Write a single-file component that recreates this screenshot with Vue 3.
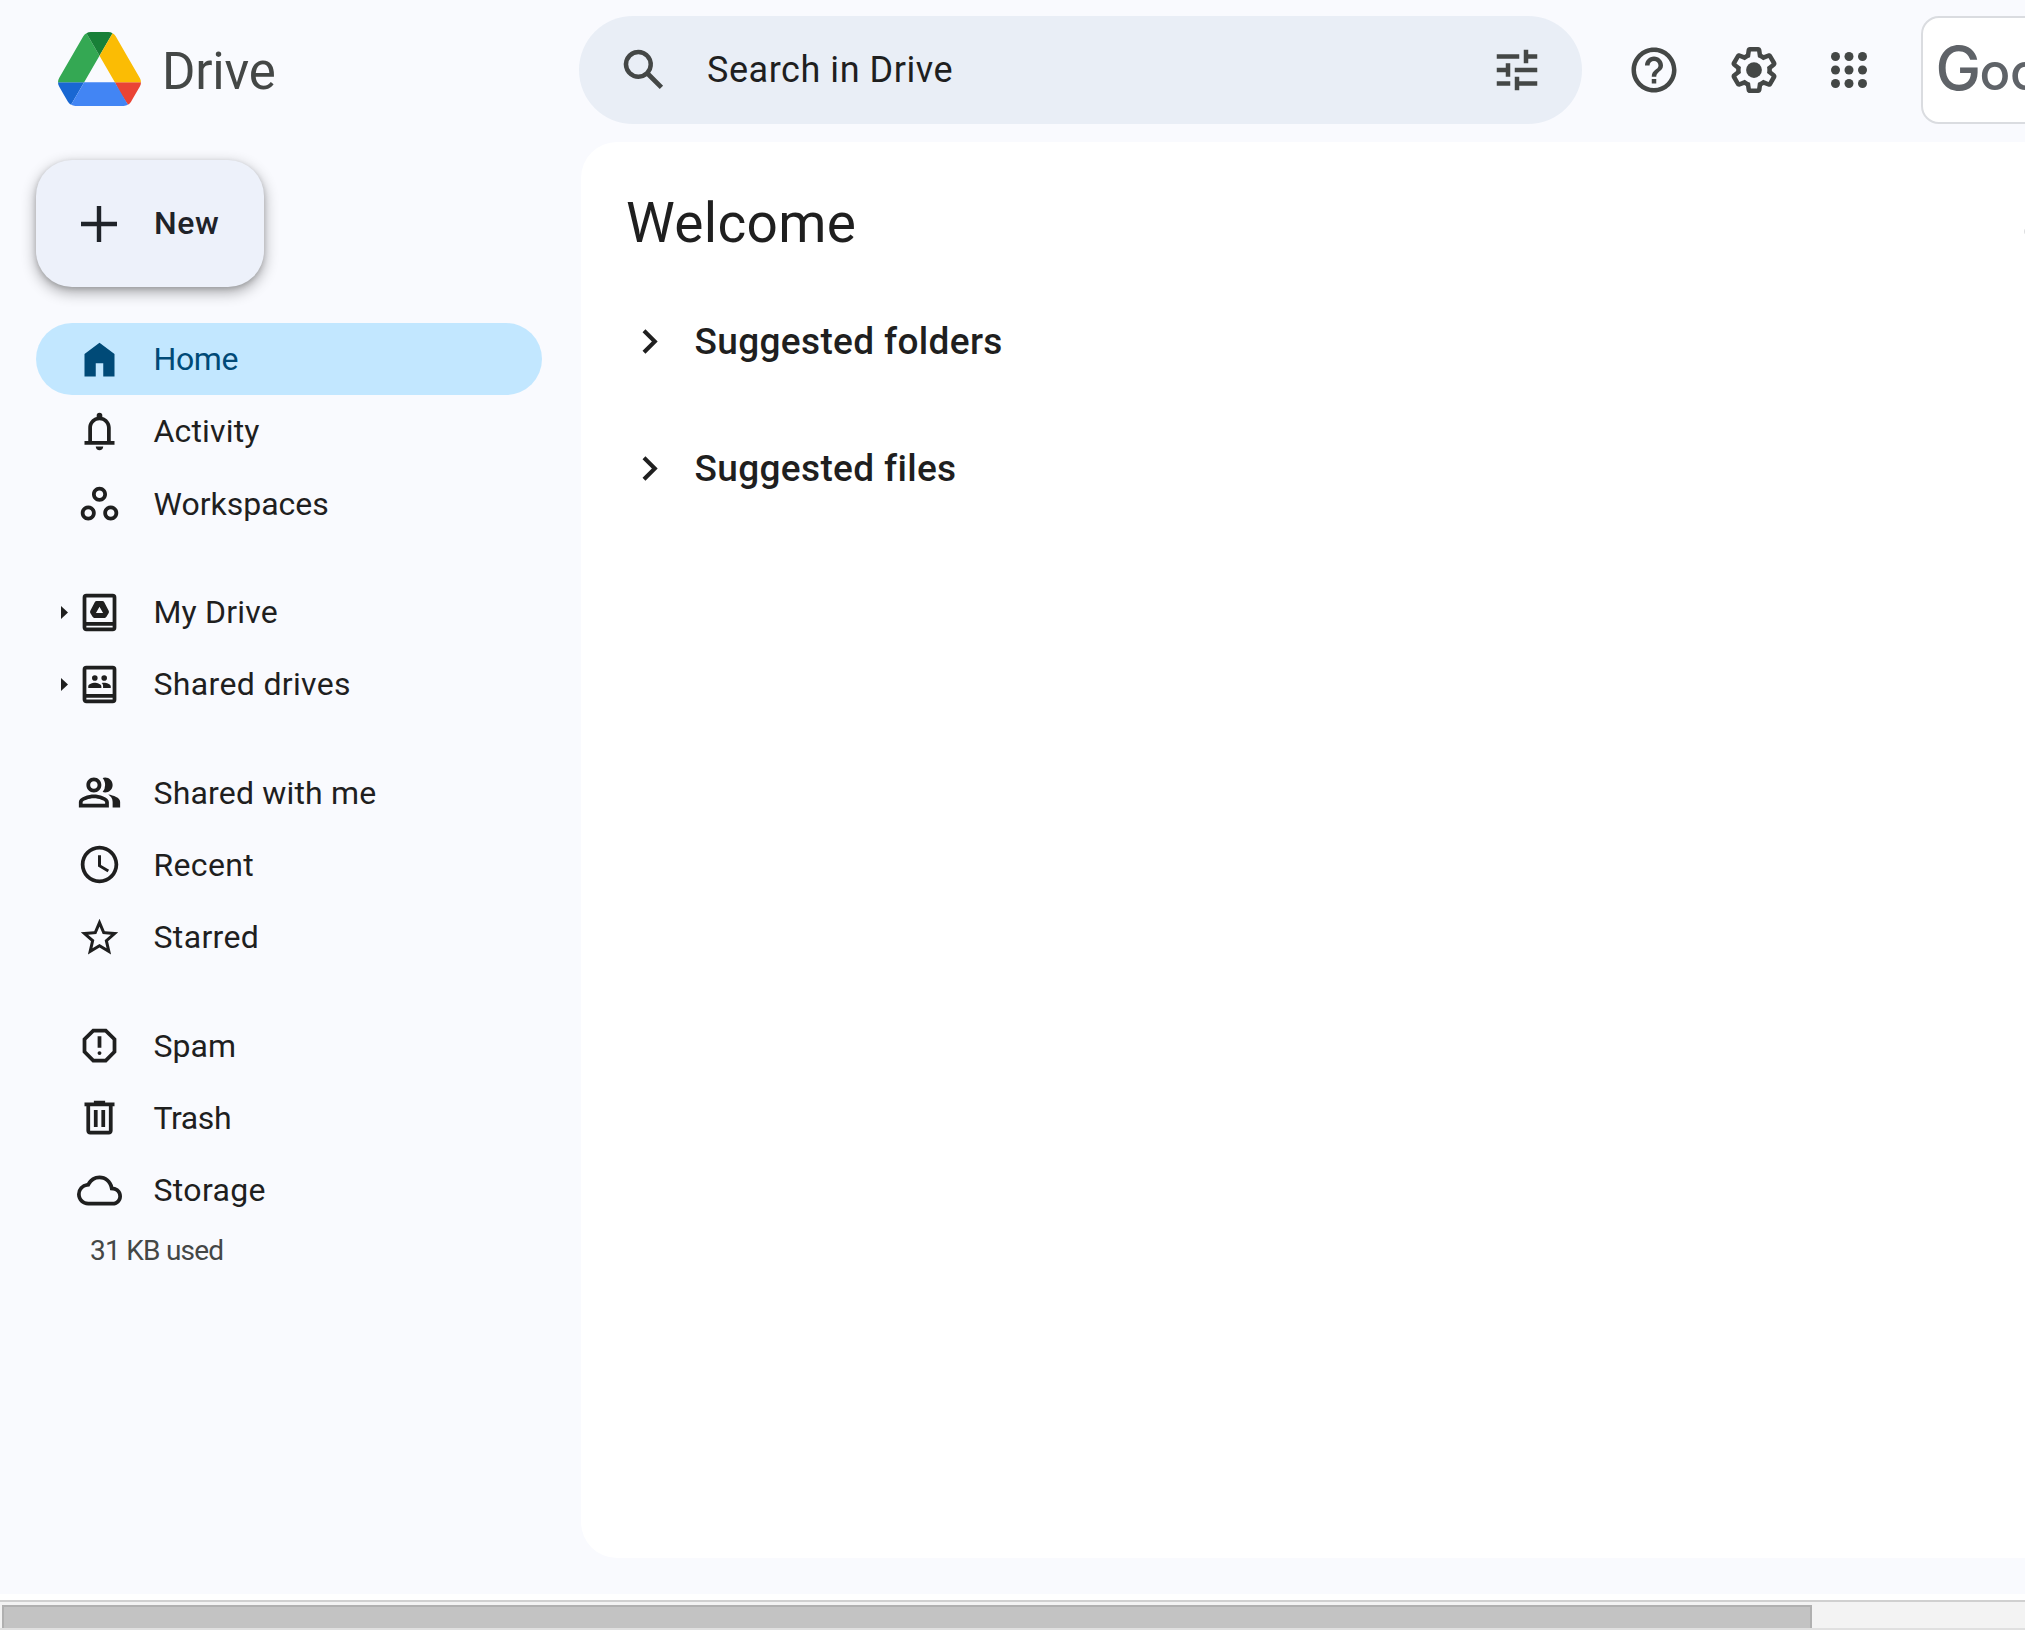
<script setup>
const groups = [
  [
    { id: 'home', label: 'Home', active: true },
    { id: 'activity', label: 'Activity' },
    { id: 'workspaces', label: 'Workspaces' },
  ],
  [
    { id: 'mydrive', label: 'My Drive', expandable: true },
    { id: 'shareddrives', label: 'Shared drives', expandable: true },
  ],
  [
    { id: 'shared', label: 'Shared with me' },
    { id: 'recent', label: 'Recent' },
    { id: 'starred', label: 'Starred' },
  ],
  [
    { id: 'spam', label: 'Spam' },
    { id: 'trash', label: 'Trash' },
    { id: 'storage', label: 'Storage' },
  ],
]

const icons = {
  home: 'M4 21V9l8-6 8 6v12h-6v-7h-4v7z',
  activity:
    'M4 19v-2h2v-7c0-2.8 1.9-5.2 4.5-5.8v-.7a1.5 1.5 0 0 1 3 0v.7C16.100 4.800 18 7.200 18 10v7h2v2zM8 17h8v-7c0-2.200-1.800-4-4-4s-4 1.800-4 4zM10 20h4c0 1.100-.9 2-2 2s-2-.9-2-2z',
  workspaces:
    'M6 13c-2.200 0-4 1.800-4 4s1.800 4 4 4 4-1.800 4-4-1.800-4-4-4zm0 6c-1.100 0-2-.9-2-2s.9-2 2-2 2 .9 2 2-.9 2-2 2zm6-16C9.800 3 8 4.800 8 7s1.800 4 4 4 4-1.800 4-4-1.800-4-4-4zm0 6c-1.100 0-2-.9-2-2s.9-2 2-2 2 .9 2 2-.9 2-2 2zm6 4c-2.200 0-4 1.800-4 4s1.800 4 4 4 4-1.800 4-4-1.800-4-4-4zm0 6c-1.100 0-2-.9-2-2s.9-2 2-2 2 .9 2 2-.9 2-2 2z',
  mydrive:
    'M19 2H5a2 2 0 0 0-2 2v16c0 1.100.9 2 2 2h14a2 2 0 0 0 2-2V4a2 2 0 0 0-2-2zm0 18H5v-1h14zm0-3H5V4h14zM10.400 5.800h3.200q.5 0 .8.5l2.500 4.700q.3.600 0 1.200l-1.200 2.100q-.3.600-.9.600H9.200q-.6 0-.9-.6l-1.200-2.100q-.3-.6 0-1.200l2.500-4.700q.3-.5.8-.5zM12 8.900l-1.900 3.300h3.800z',
  shareddrives:
    'M19 2H5a2 2 0 0 0-2 2v16c0 1.100.9 2 2 2h14a2 2 0 0 0 2-2V4a2 2 0 0 0-2-2zm0 18H5v-1h14zm0-3H5V4h14zM9.500 10a1.500 1.500 0 1 0 0-3 1.500 1.500 0 0 0 0 3zM14.500 10a1.500 1.500 0 1 0 0-3 1.500 1.500 0 0 0 0 3zM6 13.800v-.9c0-1.200 2.300-1.900 3.500-1.900s3.500.7 3.500 1.900v.9zM13.900 13.800v-1c0-.7-.3-1.200-.8-1.600.5-.1 1-.2 1.400-.2 1.200 0 3.500.7 3.500 1.900v.9z',
  shared:
    'M15 8c0-1.420-.5-2.730-1.330-3.760.420-.14.860-.24 1.330-.24 2.210 0 4 1.790 4 4s-1.790 4-4 4c-.43 0-.84-.09-1.230-.21-.03-.01-.06-.02-.1-.03A5.980 5.980 0 0 0 15 8zm1.660 5.130C18.030 14.060 19 15.320 19 17v3h4v-3c0-2.180-3.580-3.470-6.340-3.870zM9 6c-1.100 0-2 .9-2 2s.9 2 2 2 2-.9 2-2-.9-2-2-2m0 6c-2.210 0-4-1.790-4-4s1.790-4 4-4 4 1.790 4 4-1.790 4-4 4zm0 3c-2.700 0-5.800 1.290-6 2.010V18h12v-1c-.2-.71-3.300-2-6-2m0-2c2.670 0 8 1.340 8 4v3H1v-3c0-2.660 5.330-4 8-4z',
  recent:
    'M12 2C6.500 2 2 6.500 2 12s4.500 10 10 10 10-4.500 10-10S17.500 2 12 2zm0 18c-4.410 0-8-3.590-8-8s3.590-8 8-8 8 3.590 8 8-3.590 8-8 8zm.8-13h-1.600v6l5.100 3.100.8-1.300-4.300-2.600z',
  starred:
    'M22 9.240l-7.190-.62L12 2 9.190 8.630 2 9.240l5.460 4.730L5.820 21 12 17.270 18.180 21l-1.630-7.030zM12 15.400l-3.760 2.270 1-4.280-3.320-2.880 4.380-.38L12 6.100l1.710 4.040 4.380.38-3.320 2.880 1 4.280z',
  spam:
    'M15.730 3H8.270L3 8.270v7.460L8.270 21h7.460L21 15.730V8.270zM19 14.900 14.900 19H9.100L5 14.900V9.100L9.100 5h5.800L19 9.100zM11 7h2v6.200h-2zM12 15a1.050 1.050 0 1 0 0 2.100 1.050 1.050 0 0 0 0-2.100z',
  trash:
    'M15 4V3H9v1H4v2h1v13c0 1.100.9 2 2 2h10c1.100 0 2-.9 2-2V6h1V4zm2 15H7V6h10zM9 8h2v9H9zm4 0h2v9h-2z',
  storage:
    'M19.350 10.040A7.490 7.490 0 0 0 12 4C9.110 4 6.600 5.640 5.350 8.040A5.994 5.994 0 0 0 0 14c0 3.310 2.690 6 6 6h13c2.760 0 5-2.240 5-5 0-2.640-2.050-4.780-4.650-4.960zM19 18H6c-2.210 0-4-1.790-4-4 0-2.050 1.530-3.760 3.560-3.970l1.070-.11.5-.95A5.469 5.469 0 0 1 12 6c2.620 0 4.880 1.860 5.390 4.430l.3 1.500 1.530.11A2.980 2.980 0 0 1 22 15c0 1.650-1.350 3-3 3z',
}

const sections = ['Suggested folders', 'Suggested files']
const dots = [6, 12, 18]
</script>

<template>
  <div class="page">
    <header class="topbar">
      <div class="brand">
        <svg class="logo" viewBox="0 0 87.300 78" preserveAspectRatio="none">
          <path fill="#1967d2" d="m6.600 66.850 3.850 6.650c.8 1.400 1.950 2.500 3.300 3.300l13.750-23.800h-27.500c0 1.550.4 3.100 1.200 4.500z" />
          <path fill="#34a853" d="m43.650 25-13.750-23.800c-1.350.8-2.500 1.900-3.300 3.300l-25.400 44a9.060 9.060 0 0 0-1.200 4.500h27.500z" />
          <path fill="#ea4335" d="m73.550 76.800c1.350-.8 2.500-1.900 3.300-3.300l1.600-2.750 7.650-13.250c.8-1.400 1.200-2.950 1.200-4.500h-27.502l5.852 11.500z" />
          <path fill="#188038" d="m43.650 25 13.750-23.800c-1.350-.8-2.900-1.200-4.500-1.200h-18.500c-1.600 0-3.150.45-4.500 1.200z" />
          <path fill="#4285f4" d="m59.800 53h-32.300l-13.750 23.800c1.350.8 2.900 1.200 4.500 1.200h50.800c1.600 0 3.150-.45 4.500-1.200z" />
          <path fill="#fbbc04" d="m73.400 26.500-12.700-22c-.8-1.400-1.950-2.500-3.300-3.300l-13.750 23.800 16.150 28h27.450c0-1.550-.4-3.100-1.200-4.500z" />
        </svg>
        <span class="brand-name">Drive</span>
      </div>

      <div class="search">
        <svg class="ic54" viewBox="0 0 24 24">
          <path d="M20.490 19l-5.730-5.730A6.500 6.500 0 1 0 13.270 14.760L19 20.490zM5 9.500a4.500 4.500 0 1 1 9 0 4.500 4.500 0 0 1-9 0z" />
        </svg>
        <span class="placeholder">Search in Drive</span>
        <svg class="ic54" viewBox="0 0 24 24">
          <path d="M3 17v2h6v-2H3zM3 5v2h10V5H3zm10 16v-2h8v-2h-8v-2h-2v6h2zM7 9v2H3v2h4v2h2V9H7zm14 4v-2H11v2h10zm-6-4h2V7h4V5h-4V3h-2v6z" />
        </svg>
      </div>

      <div class="tools">
        <svg class="ic54" viewBox="0 0 24 24">
          <path d="M11 18h2v-2h-2v2zm1-16C6.480 2 2 6.480 2 12s4.480 10 10 10 10-4.480 10-10S17.520 2 12 2zm0 18c-4.410 0-8-3.590-8-8s3.590-8 8-8 8 3.590 8 8-3.590 8-8 8zm0-14c-2.210 0-4 1.790-4 4h2c0-1.100.9-2 2-2s2 .9 2 2c0 2-3 1.750-3 5h2c0-2.250 3-2.500 3-5 0-2.210-1.790-4-4-4z" />
        </svg>
        <svg class="ic54 gear" viewBox="0 0 24 24">
          <path d="M13.850 22.250h-3.700c-.74 0-1.360-.54-1.450-1.270l-.27-1.890c-.27-.14-.53-.29-.79-.46l-1.800.72c-.7.26-1.470-.03-1.810-.65L2.200 15.530c-.35-.66-.2-1.440.36-1.880l1.530-1.190c-.01-.15-.02-.3-.02-.46 0-.15.01-.31.02-.46l-1.520-1.190c-.59-.45-.74-1.260-.37-1.880l1.850-3.190c.34-.62 1.110-.9 1.790-.63l1.810.73c.26-.17.52-.32.78-.46l.27-1.910c.09-.7.71-1.250 1.440-1.250h3.700c.74 0 1.360.54 1.450 1.270l.27 1.890c.27.14.53.29.79.46l1.800-.72c.71-.26 1.480.03 1.820.65l1.840 3.180c.36.66.2 1.440-.36 1.880l-1.520 1.190c.01.15.02.3.02.46s-.01.31-.02.46l1.520 1.190c.56.45.72 1.230.37 1.860l-1.860 3.220c-.34.62-1.110.9-1.800.63l-1.800-.72c-.26.17-.52.32-.78.46l-.27 1.910c-.1.68-.72 1.220-1.460 1.220zm-3.230-2h2.760l.37-2.550.53-.22c.44-.18.88-.44 1.340-.78l.45-.34 2.380.96 1.380-2.400-2.030-1.580.07-.56c.03-.26.06-.51.06-.78s-.03-.53-.06-.78l-.07-.56 2.030-1.580-1.390-2.400-2.390.96-.45-.35c-.42-.32-.87-.58-1.330-.77l-.52-.22-.37-2.550h-2.760l-.37 2.550-.53.21c-.44.19-.88.44-1.340.79l-.45.33-2.380-.95-1.390 2.390 2.030 1.580-.07.56a7 7 0 0 0-.06.79c0 .26.02.53.06.78l.07.56-2.030 1.580 1.380 2.400 2.390-.96.45.35c.43.33.86.58 1.330.77l.53.22z" />
          <circle cx="12" cy="12" r="3.500" />
        </svg>
        <svg class="ic54" viewBox="0 0 24 24">
          <template v-for="y in dots" :key="y">
            <circle v-for="x in dots" :key="x" :cx="x" :cy="y" r="2" />
          </template>
        </svg>
      </div>

      <div class="account"><span class="cap">G</span><span class="rest">oogle</span></div>
    </header>

    <div class="body">
      <nav class="sidebar">
        <button class="new">
          <svg class="plus" viewBox="0 0 36 36"><path d="M15.800 0h4.400v15.800H36v4.400H20.200V36h-4.400V20.200H0v-4.400h15.800z" /></svg>
          <span class="new-label">New</span>
        </button>
        <div v-for="(group, i) in groups" :key="i" class="group">
          <div v-for="item in group" :key="item.id" class="item" :class="[item.id, { active: item.active }]">
            <span class="expander">
              <svg v-if="item.expandable" class="arrow" viewBox="0 0 7 13"><path d="M0 0l7 6.500L0 13z" /></svg>
            </span>
            <svg class="ic45" viewBox="0 0 24 24"><path fill-rule="evenodd" :d="icons[item.id]" /></svg>
            <span class="label">{{ item.label }}</span>
          </div>
        </div>
        <div class="usage">31 KB used</div>
      </nav>

      <main class="panel">
        <div class="panel-head">
          <h1>Welcome</h1>
          <svg class="info" viewBox="0 0 24 24"><path d="M11 7h2v2h-2zm0 4h2v6h-2zm1-9a10 10 0 1 0 0 20 10 10 0 0 0 0-20zm0 18a8 8 0 1 1 0-16 8 8 0 0 1 0 16z" /></svg>
        </div>
        <div v-for="name in sections" :key="name" class="section">
          <svg class="chevron" viewBox="0 0 24 24"><path d="M10 6L8.590 7.410 13.170 12l-4.580 4.590L10 18l6-6z" /></svg>
          <h2>{{ name }}</h2>
        </div>
      </main>
    </div>

    <div class="scrollbar"><div class="thumb"></div></div>
  </div>
</template>

<style>
html,
body {
  margin: 0;
  overflow: hidden;
  background: #fff;
}
</style>

<style scoped>
.page {
  width: 2025px;
  height: 1630px;
  overflow: hidden;
  display: flex;
  flex-direction: column;
  background: #f9fafe;
  font-family: Roboto, 'Open Sans', sans-serif;
  color: #1f1f1f;
  white-space: nowrap;
}
svg {
  display: block;
  flex: none;
  fill: currentColor;
}
.topbar {
  flex: none;
  height: 142px;
  display: flex;
  color: #444746;
}
.brand {
  width: 579px;
  flex: none;
  display: flex;
  align-items: flex-start;
  padding: 32px 0 0 58px;
  box-sizing: border-box;
}
.logo {
  width: 83px;
  height: 74px;
}
.brand-name {
  margin: 10px 0 0 21px;
  font-size: 51px;
  line-height: 60px;
  letter-spacing: -0.2px;
}
.search {
  width: 1003px;
  flex: none;
  height: 108px;
  margin-top: 16px;
  padding: 0 38px;
  box-sizing: border-box;
  display: flex;
  align-items: center;
  border-radius: 54px;
  background: #e9eef6;
}
.ic54 {
  width: 54px;
  height: 54px;
}
.placeholder {
  flex: 1;
  margin-left: 36px;
  font-size: 36px;
  line-height: 48px;
  letter-spacing: 0.55px;
  color: #1f1f1f;
}
.tools {
  flex: none;
  display: flex;
  width: 339px;
  padding: 43px 0 0 45px;
  box-sizing: border-box;
}
.gear {
  margin: 0 41px 0 46px;
}
.account {
  flex: none;
  width: 300px;
  height: 108px;
  margin-top: 16px;
  padding-left: 12.500px;
  box-sizing: border-box;
  border: 2px solid #dadce0;
  border-radius: 18px;
  background: #fff;
  color: #5f6368;
  font-family: Inter, sans-serif;
  font-weight: 550;
  line-height: 101px;
}
.cap {
  font-size: 61px;
  letter-spacing: -1.500px;
}
.rest {
  font-size: 51px;
  letter-spacing: -0.5px;
}
.body {
  flex: none;
  display: flex;
  height: 1452px;
}
.sidebar {
  width: 581px;
  flex: none;
  padding: 18px 39px 0 36px;
  box-sizing: border-box;
}
.new {
  display: flex;
  align-items: center;
  width: 228px;
  height: 127px;
  margin: 0 0 36px;
  padding: 0 0 0 45px;
  border: 0;
  border-radius: 36px;
  background: #edf1fa;
  box-shadow: 0 2px 5px rgba(0, 0, 0, 0.16), 0 5px 14px 1px rgba(0, 0, 0, 0.3);
  font: 500 32px/40px Roboto, sans-serif;
  color: #1f2329;
}
.plus {
  width: 36px;
  height: 36px;
  margin-right: 37px;
}
.new-label {
  padding-bottom: 2px;
  letter-spacing: 0.6px;
}
.group {
  margin-bottom: 36.150px;
}
.item {
  display: flex;
  align-items: center;
  width: 506px;
  height: 72.250px;
  border-radius: 36px;
  font-size: 32px;
}
.active {
  background: #c2e7ff;
  color: #004a77;
}
.home,
.trash {
  letter-spacing: -0.4px;
}
.activity,
.mydrive,
.shared {
  letter-spacing: 0.17px;
}
.shareddrives,
.recent,
.starred,
.storage {
  letter-spacing: 0.34px;
}
.expander {
  width: 41px;
  flex: none;
  display: flex;
}
.arrow {
  width: 7px;
  height: 13px;
  margin-left: 25px;
}
.ic45 {
  width: 45px;
  height: 45px;
}
.label {
  margin-left: 31.500px;
}
.usage {
  margin: -27px 0 0 54px;
  font-size: 28px;
  line-height: 32px;
  letter-spacing: -0.750px;
  color: #444746;
}
.panel {
  flex: 1;
  height: 1416px;
  border-radius: 36px 0 0 36px;
  background: #fff;
}
.panel-head {
  display: flex;
  align-items: center;
  height: 106px;
  padding: 30px 0 0 45px;
}
h1 {
  width: 1395px;
  margin: 0 0 4px;
  flex: none;
  font-size: 55px;
  line-height: 72px;
  font-weight: 400;
  letter-spacing: 0.3px;
}
.info {
  width: 45px;
  height: 45px;
  margin-top: 12px;
  color: #70757a;
}
.section {
  display: flex;
  align-items: center;
  height: 127px;
  padding-left: 44px;
}
.chevron {
  width: 49px;
  height: 49px;
}
h2 {
  margin: 0 0 0 20.500px;
  font-size: 37px;
  line-height: 48px;
  font-weight: 500;
  letter-spacing: 0.35px;
}
.scrollbar {
  flex: none;
  box-sizing: border-box;
  height: 30px;
  margin-top: 6px;
  padding: 3px 0 0 2px;
  border-top: 2px solid #d0d0d0;
  border-bottom: 2px solid #e0e0e0;
  background: #f3f3f3;
  box-shadow: 0 -6px 0 #fff;
}
.thumb {
  width: 1810px;
  height: 23px;
  box-sizing: border-box;
  border: 2px solid #b0b0b0;
  border-bottom: 0;
  background: #c3c3c3;
}
</style>
